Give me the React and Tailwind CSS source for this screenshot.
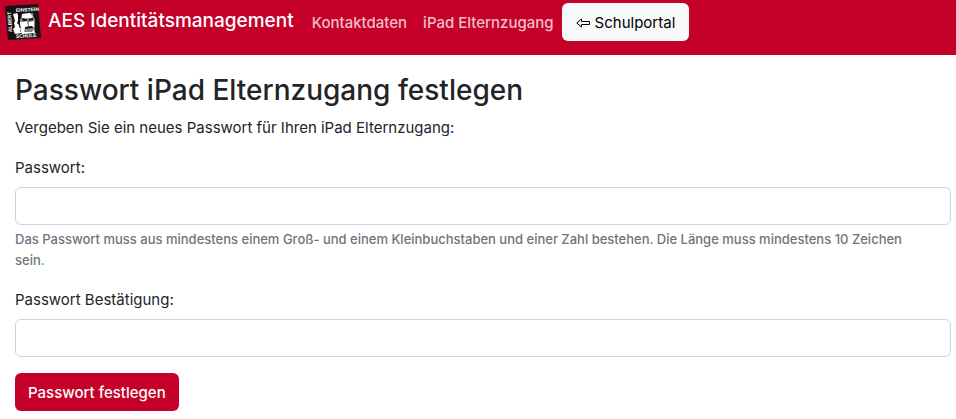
import { useState } from "react";

function SchoolLogo() {
  return (
    <svg viewBox="0 0 36 38" className="h-[38px] w-9 shrink-0" role="img" aria-label="Albert Einstein Schule">
      <polygon points="0,3 33,1 36,35 3,37" fill="#161314" />
      <path d="M8 11l4-1 1 2 0 6-1 2 3 3 0 5 2 2-7 1-2-5 2-2-1-4 1-2z" fill="#ffffff" />
      <path d="M15 11l13-1 2 6 0 8-1 6-12 1-2-7z" fill="#8b8585" />
      <path
        d="M17 11l8-1 3 4-2 1-3 0-3 1-3-1zM15 19l4 0 3-1 1 5-3 2-1 4 8 0 2-3 1 4-13 1-2-5zM24 19l5-1 0 6-3-1-2 0z"
        fill="#ffffff"
      />
      <path
        d="M13 10l4 0-1 5-2 4-1-2zM17 15l5 1 0 2-4 0zM24 16l4-1 0 2-4 1zM20 24l7-1 1 2-8 1zM14 20l1 1 1 5-2-2zM28 10l3 1 0 6-2-2z"
        fill="#161314"
      />
      <text
        x="11"
        y="9"
        transform="rotate(-3 11 9)"
        fill="#ffffff"
        className="font-['Liberation_Sans'] text-[5px] font-bold"
      >
        EINSTEIN
      </text>
      <text
        x="7"
        y="29"
        transform="rotate(-93 7 29)"
        fill="#ffffff"
        className="font-['Liberation_Sans'] text-[5px] font-bold"
      >
        ALBERT
      </text>
      <text
        x="11"
        y="35"
        transform="rotate(-3 11 35)"
        fill="#ffffff"
        className="font-['Liberation_Sans'] text-[5px] font-bold"
      >
        SCHULE
      </text>
    </svg>
  );
}

function ArrowLeft() {
  return (
    <svg viewBox="0 0 14 10" className="h-[10px] w-[14px]" fill="none" stroke="currentColor" aria-hidden="true">
      <path d="M.8 5l4.7-4v2.5h8v3h-8V9z" />
    </svg>
  );
}

function NavBar() {
  return (
    <header className="bg-[#c50029] pb-3.5">
      <nav className="flex flex-wrap items-center gap-x-2.5 px-[5px] pt-[3px]">
        <a href="#" className="flex items-center gap-[7px] text-[19px] text-white">
          <SchoolLogo />
          <span className="pb-0.5 font-medium">AES Identitätsmanagement</span>
        </a>
        <div className="flex items-center">
          <a href="#kontaktdaten" className="px-2 pt-0.5 font-medium text-white/75">
            Kontaktdaten
          </a>
          <a href="#ipad" className="px-2 pt-0.5 font-medium text-white/75">
            iPad Elternzugang
          </a>
          <button
            type="button"
            className="flex h-[38px] items-center gap-[5px] rounded-md bg-[#f8f9fa] px-3.5 pt-0.5 text-black"
          >
            <ArrowLeft />
            Schulportal
          </button>
        </div>
      </nav>
    </header>
  );
}

function PasswordField({ id, label, hint, value, onChange }) {
  return (
    <div className="mb-4">
      <label htmlFor={id} className="mb-1.5 block leading-[26px]">
        {label}
      </label>
      <input
        id={id}
        type="password"
        value={value}
        onChange={(e) => onChange(e.target.value)}
        aria-describedby={hint ? `${id}-hint` : undefined}
        className="block h-[38px] w-full rounded-md border border-[#ced4da] bg-white px-3"
      />
      {hint && (
        <p id={`${id}-hint`} className="mt-1 pr-8 text-[13px] leading-[21px] font-medium text-[#6c757d]">
          {hint}
        </p>
      )}
    </div>
  );
}

export default function App() {
  const [password, setPassword] = useState("");
  const [confirmation, setConfirmation] = useState("");

  return (
    <div className="bg-white font-['Inter',sans-serif] text-[15px] text-[#212529]">
      <NavBar />
      <main className="pt-[18px] pr-[5px] pl-[15px]">
        <h1 className="mb-2 text-[28px] leading-[34px] font-medium">Passwort iPad Elternzugang festlegen</h1>
        <p className="mb-3.5 leading-[26px]">Vergeben Sie ein neues Passwort für Ihren iPad Elternzugang:</p>
        <form onSubmit={(e) => e.preventDefault()}>
          <PasswordField
            id="password"
            label="Passwort:"
            hint="Das Passwort muss aus mindestens einem Groß- und einem Kleinbuchstaben und einer Zahl bestehen. Die Länge muss mindestens 10 Zeichen sein."
            value={password}
            onChange={setPassword}
          />
          <PasswordField
            id="confirmation"
            label="Passwort Bestätigung:"
            value={confirmation}
            onChange={setConfirmation}
          />
          <button type="submit" className="h-[38px] rounded-md bg-[#c50029] px-[13px] pt-0.5 font-medium text-white">
            Passwort festlegen
          </button>
        </form>
      </main>
    </div>
  );
}
